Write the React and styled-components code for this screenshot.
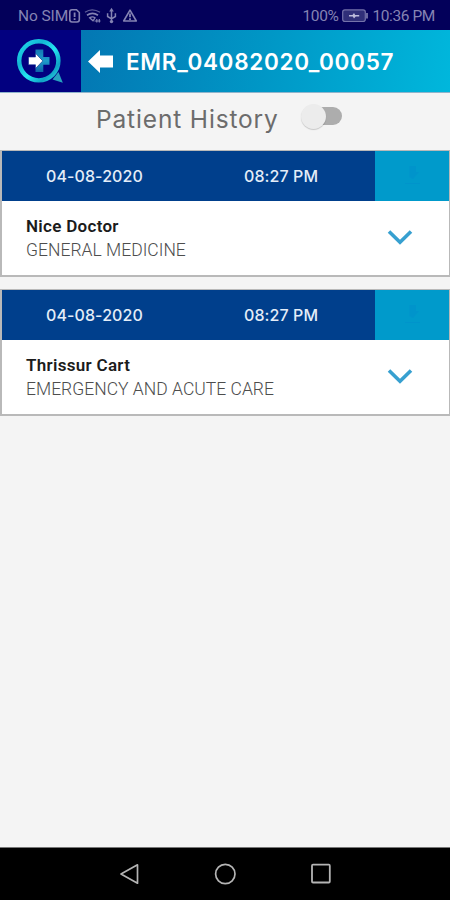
import React from 'react';
import styled, { createGlobalStyle } from 'styled-components';

const visits = [
  {
    id: 1,
    date: '04-08-2020',
    time: '08:27 PM',
    doctor: 'Nice Doctor',
    department: 'GENERAL MEDICINE',
  },
  {
    id: 2,
    date: '04-08-2020',
    time: '08:27 PM',
    doctor: 'Thrissur Cart',
    department: 'EMERGENCY AND ACUTE CARE',
  },
];

const App = () => {
  return (
    <>
      <GlobalStyle />
      <Screen>
        <StatusBar>
          <StatusGroup>
            <StatusText>No SIM</StatusText>
            <StatusIcons />
          </StatusGroup>
          <StatusGroup>
            <StatusText $tight>100%</StatusText>
            <BatteryIcon />
            <StatusText $tight>10:36 PM</StatusText>
          </StatusGroup>
        </StatusBar>
        <Header>
          <LogoBox>
            <Logo />
          </LogoBox>
          <TitleBar>
            <svg width="26" height="24" viewBox="0 0 26 24">
              <path d="M0 12.5 L12 1 V6.5 H25 V18.5 H12 V24 Z" fill="#fff" />
            </svg>
            <Title>EMR_04082020_00057</Title>
          </TitleBar>
        </Header>
        <HistoryRow>
          <HistoryLabel>Patient History</HistoryLabel>
          <Switch>
            <Knob />
          </Switch>
        </HistoryRow>
        <VisitList>
          {visits.map((visit) => (
            <VisitCard key={visit.id}>
              <CardHeader>
                <VisitDate>{visit.date}</VisitDate>
                <VisitTime>{visit.time}</VisitTime>
                <DownloadBox>
                  <svg width="20" height="24" viewBox="0 0 20 24">
                    <path
                      d="M7.5 2 H14 V8 H17 L11 15 L7.5 13 Z M3 19 H18 V20 H3 Z"
                      fill="#0090cc"
                      opacity="0.55"
                    />
                  </svg>
                </DownloadBox>
              </CardHeader>
              <CardBody>
                <div>
                  <Doctor>{visit.doctor}</Doctor>
                  <Department>{visit.department}</Department>
                </div>
                <svg width="26" height="18" viewBox="0 0 26 18">
                  <path
                    d="M2 2.5 L13 13.3 L24 2.5"
                    fill="none"
                    stroke="#37a0d0"
                    strokeWidth="3.6"
                  />
                </svg>
              </CardBody>
            </VisitCard>
          ))}
        </VisitList>
        <NavBar>
          <svg width="22" height="24" viewBox="0 0 22 24">
            <path
              d="M3 12 L19.5 2.8 V21.2 Z"
              fill="none"
              stroke="#b4b4b4"
              strokeWidth="1.7"
              strokeLinejoin="round"
            />
          </svg>
          <svg width="24" height="24" viewBox="0 0 24 24">
            <circle
              cx="12.3"
              cy="12"
              r="9.7"
              fill="none"
              stroke="#b4b4b4"
              strokeWidth="1.7"
            />
          </svg>
          <svg width="22" height="24" viewBox="0 0 22 24">
            <rect
              x="2"
              y="2.7"
              width="17.8"
              height="17.8"
              rx="1"
              fill="none"
              stroke="#b4b4b4"
              strokeWidth="1.8"
            />
          </svg>
        </NavBar>
      </Screen>
    </>
  );
};

const StatusIcons = () => (
  <svg
    width="72"
    height="18"
    viewBox="0 0 72 18"
    fill="none"
    stroke="#8583b3"
    strokeWidth="1.6"
  >
    <path d="M5 2.7 H9.5 L12.3 5.5 V12.5 Q12.3 15 10 15 H5 Q2.8 15 2.8 12.5 V5 Q2.8 2.7 5 2.7 Z" />
    <path d="M7.6 5.5 V10 M7.6 11.2 V13" strokeWidth="1.8" />
    <path d="M18 5.3 Q25 0.5 33 5.3" strokeWidth="1.3" opacity="0.7" />
    <path d="M20 8.2 Q25.5 4.6 31 8.2" strokeWidth="1.7" />
    <path d="M22.6 10.8 Q25.5 8.8 28 10.8 L26 13.8 Z" strokeWidth="1.3" />
    <path d="M27.5 14 H33.5 M29.8 12 V15.5 M32.3 12 V15.5" strokeWidth="1.2" />
    <path d="M44.5 3 V15 M40.6 6.3 V9.5 L44.5 11.8 L48.4 9.5 V6.3" strokeWidth="1.5" />
    <path d="M44.5 0.8 L46.8 4.5 H42.2 Z" fill="#8583b3" stroke="none" />
    <circle cx="44.5" cy="14.6" r="1.7" fill="#8583b3" stroke="none" />
    <path d="M63 3.2 L69.3 14 H56.7 Z" strokeLinejoin="round" />
    <path d="M63 6.5 V10.3 M63 11.3 V13" strokeWidth="1.8" />
  </svg>
);

const BatteryIcon = () => (
  <svg width="26" height="14" viewBox="0 0 26 14">
    <rect
      x="0.7"
      y="0.9"
      width="22.6"
      height="11.6"
      rx="2.2"
      fill="#302f79"
      stroke="#7472aa"
      strokeWidth="1.2"
    />
    <path d="M25 4 V9.5" stroke="#8583b3" strokeWidth="1.6" />
    <path d="M7 6 H10.5 L12 4 L13.2 6 H17.2 V7.5 H13.7 L12 9.4 L10.8 7.5 H7 Z" fill="#bdbbdb" />
  </svg>
);

const Logo = () => (
  <svg width="48" height="48" viewBox="0 0 48 48">
    <defs>
      <linearGradient id="ring" x1="0" y1="0" x2="1" y2="1">
        <stop offset="0" stopColor="#1fdcec" />
        <stop offset="0.3" stopColor="#14b6d4" />
        <stop offset="0.55" stopColor="#25e6f2" />
        <stop offset="0.8" stopColor="#0fa3c5" />
        <stop offset="1" stopColor="#36d5e6" />
      </linearGradient>
      <linearGradient id="cross" x1="0" y1="0" x2="0" y2="1">
        <stop offset="0" stopColor="#1279b4" />
        <stop offset="0.5" stopColor="#1f9ccb" />
        <stop offset="1" stopColor="#0c62a8" />
      </linearGradient>
    </defs>
    <path d="M41.5 34 L45.8 44.8 L35.5 41.5 Z" fill="#26a2bf" />
    <circle
      cx="21.8"
      cy="22.8"
      r="19.6"
      fill="none"
      stroke="url(#ring)"
      strokeWidth="4.4"
    />
    <path
      d="M18.5 11.5 H26.3 V19 H32.5 V26.7 H26.3 V34 H18.5 Z"
      fill="url(#cross)"
    />
    <path
      d="M11.5 19 H18.5 V15.3 L25.8 22.9 L18.5 30.5 V26.8 H11.5 Z"
      fill="#fff"
      stroke="#05268a"
      strokeWidth="0.6"
    />
  </svg>
);

const GlobalStyle = createGlobalStyle`
  * {
    box-sizing: border-box;
  }
  body {
    margin: 0;
    font-family: Roboto, sans-serif;
  }
  svg {
    display: block;
    flex-shrink: 0;
  }
`;

const Screen = styled.div`
  width: 450px;
  height: 900px;
  display: flex;
  flex-direction: column;
  background: #f4f4f4;
  overflow: hidden;
`;

const StatusBar = styled.div`
  height: 30px;
  padding: 2px 15px 0 18px;
  display: flex;
  align-items: center;
  justify-content: space-between;
  background: #03005a;
`;

const StatusGroup = styled.div`
  display: flex;
  align-items: center;
  gap: 4px;
  & > svg:last-child {
    margin-left: -5px;
  }
`;

const StatusText = styled.span`
  font-size: 15.5px;
  line-height: 18px;
  letter-spacing: ${({ $tight }) => ($tight ? '-0.4px' : '-0.1px')};
  white-space: nowrap;
  color: #8583b3;
`;

const Header = styled.header`
  height: 63px;
  display: flex;
  border-bottom: 1px solid #8fb4cb;
`;

const LogoBox = styled.div`
  width: 81px;
  padding: 8px 0 0 17px;
  background: #020080;
`;

const TitleBar = styled.div`
  flex: 1;
  display: flex;
  align-items: center;
  padding-left: 7px;
  background: linear-gradient(100deg, #0377b3 0%, #0097c6 50%, #00b7dc 100%);
`;

const Title = styled.h1`
  margin: 2px 0 0 12px;
  font-family: Inter, sans-serif;
  font-size: 22.5px;
  font-weight: 600;
  line-height: 30px;
  letter-spacing: 0.7px;
  white-space: nowrap;
  color: #fff;
`;

const HistoryRow = styled.div`
  height: 57px;
  display: flex;
  align-items: flex-start;
  padding: 10px 0 0 96px;
`;

const HistoryLabel = styled.span`
  width: 208px;
  font-family: Inter, sans-serif;
  font-size: 24.5px;
  line-height: 32px;
  letter-spacing: 0.85px;
  white-space: nowrap;
  color: #6c6c6c;
`;

const Switch = styled.div`
  width: 38px;
  height: 18px;
  margin-top: 4px;
  display: flex;
  align-items: center;
  border-radius: 9px;
  background: #adadad;
`;

const Knob = styled.div`
  width: 25px;
  height: 25px;
  margin-left: -3px;
  flex-shrink: 0;
  border-radius: 50%;
  background: #ececec;
  box-shadow: 0 1px 1px rgba(0, 0, 0, 0.18);
`;

const VisitList = styled.main`
  flex: 1;
  display: flex;
  flex-direction: column;
  gap: 12px;
`;

const VisitCard = styled.section`
  height: 127px;
  border: 1px solid #b9b9b9;
  border-left-width: 2px;
  border-bottom-width: 2px;
  background: #fff;
`;

const CardHeader = styled.div`
  height: 50px;
  display: flex;
  align-items: center;
  background: #003f8c;
  font-family: Inter, sans-serif;
  font-size: 16px;
  font-weight: 500;
  color: #e4edf8;
`;

const VisitDate = styled.span`
  width: 242px;
  padding-left: 44px;
  letter-spacing: 0.1px;
`;

const VisitTime = styled.span`
  width: 131px;
  letter-spacing: 0.1px;
`;

const DownloadBox = styled.div`
  flex: 1;
  height: 100%;
  display: flex;
  align-items: center;
  justify-content: center;
  background: #009acb;
`;

const CardBody = styled.div`
  height: 74px;
  display: flex;
  align-items: center;
  justify-content: space-between;
  padding: 0 36px 0 24px;
`;

const Doctor = styled.div`
  font-size: 17px;
  font-weight: 600;
  line-height: 23px;
  letter-spacing: 0.3px;
  white-space: nowrap;
  color: #1b1b1b;
`;

const Department = styled.div`
  font-size: 17.5px;
  font-weight: 300;
  line-height: 24px;
  letter-spacing: 0.02px;
  white-space: nowrap;
  color: #4d4d4d;
`;

const NavBar = styled.nav`
  height: 53px;
  display: flex;
  align-items: center;
  justify-content: center;
  gap: 73px;
  padding-bottom: 1px;
  border-top: 1px solid #777;
  background: #000;
`;

export default App;
